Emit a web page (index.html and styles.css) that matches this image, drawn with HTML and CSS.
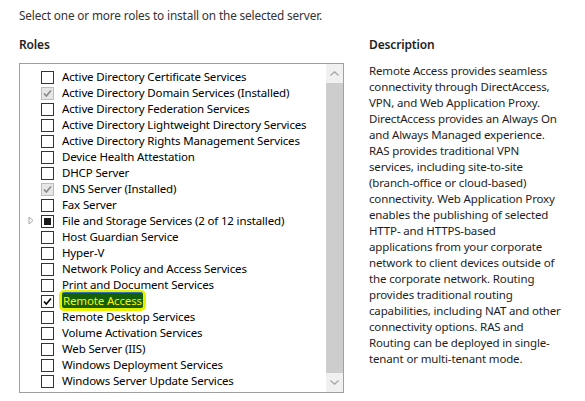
FILE: index.html
```html
<!DOCTYPE html>
<html lang="en">
  <head>
    <meta charset="UTF-8" />
    <title>Select server roles</title>
    <link rel="stylesheet" href="styles.css">
  </head>
  <body>
    <p class="intro">Select one or more roles to install on the selected server.</p>

    <div class="columns">
      <div class="roles">
        <h3>Roles</h3>
        <div class="listbox">
          <ul class="items">
            <li><span class="exp"></span><span class="box"></span>Active Directory Certificate Services</li>
            <li><span class="exp"></span><span class="box off">
              <svg viewBox="0 0 11 11"><path d="M2 5.5 L4.3 8 L9 2.5" /></svg></span>Active Directory Domain Services (Installed)</li>
            <li><span class="exp"></span><span class="box"></span>Active Directory Federation Services</li>
            <li><span class="exp"></span><span class="box"></span>Active Directory Lightweight Directory Services</li>
            <li><span class="exp"></span><span class="box"></span>Active Directory Rights Management Services</li>
            <li><span class="exp"></span><span class="box"></span>Device Health Attestation</li>
            <li><span class="exp"></span><span class="box"></span>DHCP Server</li>
            <li><span class="exp"></span><span class="box off">
              <svg viewBox="0 0 11 11"><path d="M2 5.5 L4.3 8 L9 2.5" /></svg></span>DNS Server (Installed)</li>
            <li><span class="exp"></span><span class="box"></span>Fax Server</li>
            <li><span class="exp">
              <svg viewBox="0 0 6 9"><path d="M1 1 L5 4.5 L1 8 Z" /></svg></span><span class="box part"><span></span></span>File and Storage Services (2 of 12 installed)</li>
            <li><span class="exp"></span><span class="box"></span>Host Guardian Service</li>
            <li><span class="exp"></span><span class="box"></span>Hyper-V</li>
            <li><span class="exp"></span><span class="box"></span>Network Policy and Access Services</li>
            <li><span class="exp"></span><span class="box"></span>Print and Document Services</li>
            <li><span class="exp"></span><span class="box on">
              <svg viewBox="0 0 11 11"><path d="M2 5.5 L4.3 8 L9 2.5" /></svg></span><span class="marked">Remote Access</span></li>
            <li><span class="exp"></span><span class="box"></span>Remote Desktop Services</li>
            <li><span class="exp"></span><span class="box"></span>Volume Activation Services</li>
            <li><span class="exp"></span><span class="box"></span>Web Server (IIS)</li>
            <li><span class="exp"></span><span class="box"></span>Windows Deployment Services</li>
            <li><span class="exp"></span><span class="box"></span>Windows Server Update Services</li>
          </ul>
          <div class="scrollbar">
            <div class="arrow">
              <svg viewBox="0 0 9 5"><path d="M0.5 4.5 L4.5 0.8 L8.5 4.5" /></svg>
            </div>
            <div class="thumb"></div>
            <div class="arrow">
              <svg viewBox="0 0 9 5"><path d="M0.5 0.5 L4.5 4.2 L8.5 0.5" /></svg>
            </div>
          </div>
        </div>
      </div>

      <div class="description">
        <h3>Description</h3>
        <p>
          Remote Access provides seamless<br>
          connectivity through DirectAccess,<br>
          VPN, and Web Application Proxy.<br>
          DirectAccess provides an Always On<br>
          and Always Managed experience.<br>
          RAS provides traditional VPN<br>
          services, including site-to-site<br>
          (branch-office or cloud-based)<br>
          connectivity. Web Application Proxy<br>
          enables the publishing of selected<br>
          HTTP- and HTTPS-based<br>
          applications from your corporate<br>
          network to client devices outside of<br>
          the corporate network. Routing<br>
          provides traditional routing<br>
          capabilities, including NAT and other<br>
          connectivity options. RAS and<br>
          Routing can be deployed in single-<br>
          tenant or multi-tenant mode.
        </p>
      </div>
    </div>
  </body>
</html>
```

FILE: styles.css
```css
* {
  box-sizing: border-box;
}
body {
  margin: 0;
  background-color: #fff;
  color: #1e1e1e;
  font-family: "Noto Sans", "Open Sans", sans-serif;
  font-size: 11.5px;
  letter-spacing: -0.15px;
  width: 585px;
  height: 401px;
  overflow: hidden;
}
.intro {
  margin: 0;
  padding: 7px 0 0 19px;
  line-height: 16px;
  font-size: 11.8px;
  color: #333;
}
.columns {
  display: flex;
  padding: 14px 0 0 19px;
}
h3 {
  margin: 0;
  font-size: 12px;
  font-weight: 600;
  line-height: 16px;
}
.roles {
  width: 325px;
}
.listbox {
  display: flex;
  margin-top: 10px;
  height: 330px;
  border: 1px solid #a0a0a0;
}
.items {
  flex: 1;
  list-style: none;
  margin: 0;
  padding: 4px 0 0 0;
}
.items li {
  display: flex;
  align-items: center;
  height: 16px;
  white-space: nowrap;
  color: #000;
}
.exp {
  width: 21px;
  padding-left: 8px;
  display: flex;
  align-items: center;
}
.exp svg {
  width: 6px;
  height: 9px;
  fill: none;
  stroke: #a6a6a6;
  stroke-width: 1;
}
.box {
  width: 13px;
  height: 13px;
  border: 1px solid #333;
  background-color: #fff;
  margin-right: 8px;
  margin-top: 2px;
  display: flex;
  align-items: center;
  justify-content: center;
  flex-shrink: 0;
}
.box svg {
  width: 11px;
  height: 11px;
  fill: none;
  stroke: #000;
  stroke-width: 1.6;
}
.box.off {
  border-color: #bcbcbc;
  background-color: #e6e6e6;
}
.box.off svg {
  stroke: #8a8a8a;
}
.box.part span {
  width: 7px;
  height: 7px;
  background-color: #1a1a1a;
}
.marked {
  background-color: #145f08;
  color: #f6f600;
  padding: 0 1px;
  box-shadow: 0 -1px 0 #2f72b8, 0 0 0 3px #e8f200;
  border-radius: 2px;
}
.scrollbar {
  width: 17px;
  display: flex;
  flex-direction: column;
  background-color: #f0f0f0;
}
.arrow {
  height: 19px;
  display: flex;
  align-items: center;
  justify-content: center;
}
.arrow svg {
  width: 9px;
  height: 5px;
  fill: none;
  stroke: #a3a3a3;
  stroke-width: 1.2;
}
.thumb {
  flex: 1;
  background-color: #cdcdcd;
}
.description {
  margin-left: 25px;
  width: 212px;
}
.description p {
  margin: 10px 0 0 0;
  line-height: 16px;
  white-space: nowrap;
  color: #1e1e1e;
}
```
